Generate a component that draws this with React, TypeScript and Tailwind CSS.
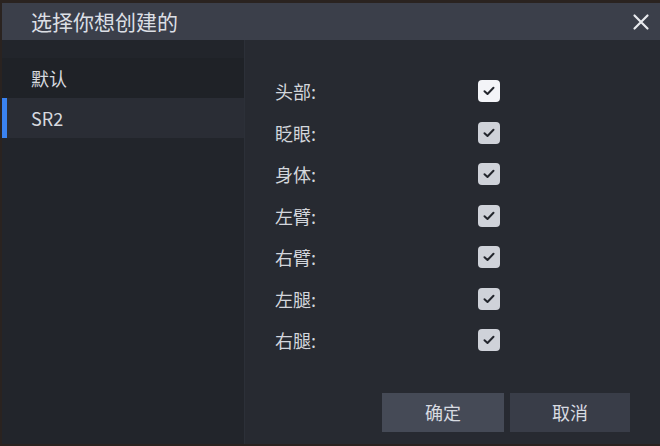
import React, { useState } from 'react';

const PARTS = ['头部', '眨眼', '身体', '左臂', '右臂', '左腿', '右腿'];
const PRESETS = ['默认', 'SR2'];

function Check({ active }: { active: boolean }) {
  return (
    <div className={`w-[22px] h-[22px] rounded-[4px] flex items-center justify-center ${active ? 'bg-[#f3f4f8]' : 'bg-[#cfd2d9]'}`}>
      <svg width="12" height="10" viewBox="0 0 12 10" fill="none">
        <path d="M1.5 5.2 L4.5 8 L10.5 1.8" stroke="#23262d" strokeWidth="2" strokeLinecap="round" strokeLinejoin="round" />
      </svg>
    </div>
  );
}

export default function App() {
  const [selected, setSelected] = useState(1);

  return (
    <div className="w-[660px] h-[446px] bg-[#2a2320] pl-[2px] pt-[3px] pb-[2px] overflow-hidden" style={{ fontFamily: '"Noto Sans CJK SC", "Noto Sans", sans-serif' }}>
      <div className="w-[658px] h-[441px] flex flex-col bg-[#272a31]">
        {/* Header */}
        <div className="h-[37px] shrink-0 bg-[#3b3f4a] flex items-center justify-between pl-[29px] pr-[10px]">
          <span className="text-[21px] text-[#dcdfe5] leading-none">选择你想创建的</span>
          <svg width="18" height="18" viewBox="0 0 18 18">
            <path d="M2.5 2.5 L15.5 15.5 M15.5 2.5 L2.5 15.5" stroke="#e8eaee" strokeWidth="2.2" strokeLinecap="round" />
          </svg>
        </div>

        <div className="flex flex-1 min-h-0">
          {/* Sidebar */}
          <div className="w-[243px] bg-[#22252b] border-r border-[#2c3038] pt-[18px]">
            {PRESETS.map((p, i) => (
              <div
                key={p}
                onClick={() => setSelected(i)}
                className={`h-[40px] flex items-center relative pl-[29px] text-[18px] text-[#d6d9df] ${i === selected ? 'bg-[#2a2d35]' : 'bg-[#1f2227]'}`}
              >
                {i === selected && <div className="absolute left-0 top-0 bottom-0 w-[5px] bg-[#3a82f0]" />}
                {p}
              </div>
            ))}
          </div>

          {/* Content */}
          <div className="flex-1 flex flex-col pl-[30px] pr-[30px] pt-[40px] pb-[12px]">
            <div className="flex flex-col gap-[19.5px] w-[225px]">
              {PARTS.map((part, i) => (
                <div key={part} className="flex items-center justify-between h-[22px]">
                  <span className="text-[18px] text-[#d3d6dc] leading-none">{part}:</span>
                  <Check active={i === 0} />
                </div>
              ))}
            </div>
            <div className="mt-auto flex justify-end gap-[6px]">
              <button className="w-[122px] h-[39px] bg-[#454a56] text-[18px] text-[#d8dbe1]">确定</button>
              <button className="w-[120px] h-[39px] bg-[#393d48] text-[18px] text-[#d8dbe1]">取消</button>
            </div>
          </div>
        </div>
      </div>
    </div>
  );
}
